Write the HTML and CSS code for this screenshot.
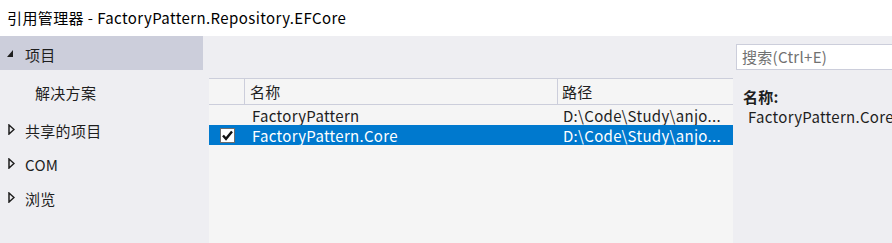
FILE: index.html
```html
<!DOCTYPE html>
<html lang="zh">
<head>
<meta charset="utf-8">
<title>引用管理器</title>
<link rel="stylesheet" href="styles.css">
</head>
<body>
<div class="window">
  <div class="titlebar">引用管理器 - FactoryPattern.Repository.EFCore</div>
  <div class="main">
    <nav class="sidebar">
      <div class="nav-item selected">
        <svg class="arrow" width="6" height="7" viewBox="0 0 6 7"><polygon points="6,0 6,7 0,7" fill="#1e1e1e"/></svg>
        <span>项目</span>
      </div>
      <div class="nav-item child"><span>解决方案</span></div>
      <div class="nav-item">
        <svg class="arrow" width="7" height="11" viewBox="0 0 7 11"><polygon points="1,1 6,5.5 1,10" fill="none" stroke="#1e1e1e" stroke-width="1.5"/></svg>
        <span>共享的项目</span>
      </div>
      <div class="nav-item">
        <svg class="arrow" width="7" height="11" viewBox="0 0 7 11"><polygon points="1,1 6,5.5 1,10" fill="none" stroke="#1e1e1e" stroke-width="1.5"/></svg>
        <span>COM</span>
      </div>
      <div class="nav-item">
        <svg class="arrow" width="7" height="11" viewBox="0 0 7 11"><polygon points="1,1 6,5.5 1,10" fill="none" stroke="#1e1e1e" stroke-width="1.5"/></svg>
        <span>浏览</span>
      </div>
    </nav>
    <section class="center">
      <div class="toolbar"></div>
      <div class="list">
        <div class="row header">
          <div class="cell c-check"></div>
          <div class="cell c-name">名称</div>
          <div class="cell c-path">路径</div>
        </div>
        <div class="row">
          <div class="cell c-check"></div>
          <div class="cell c-name">FactoryPattern</div>
          <div class="cell c-path">D:\Code\Study\anjo...</div>
        </div>
        <div class="row selected">
          <div class="cell c-check">
            <span class="checkbox"><svg width="13" height="13" viewBox="0 0 13 13"><path d="M2 6.5 L5 9.8 L11 2.5" fill="none" stroke="#111" stroke-width="2.4"/></svg></span>
          </div>
          <div class="cell c-name">FactoryPattern.Core</div>
          <div class="cell c-path">D:\Code\Study\anjo...</div>
        </div>
      </div>
    </section>
    <aside class="details">
      <div class="search">搜索(Ctrl+E)</div>
      <div class="label">名称:</div>
      <div class="value">FactoryPattern.Core</div>
    </aside>
  </div>
</div>
</body>
</html>
```

FILE: styles.css
```css
html, body {
  margin: 0;
  padding: 0;
}
body {
  background: #eeeef2;
  color: #1e1e1e;
  font-family: "Noto Sans CJK SC", "Noto Sans", sans-serif;
  font-size: 15px;
  letter-spacing: 0.3px;
  width: 892px;
  height: 243px;
  overflow: hidden;
}
.titlebar {
  height: 36px;
  line-height: 36px;
  background: #ffffff;
  padding-left: 7px;
  color: #000;
  white-space: nowrap;
  letter-spacing: 0.4px;
}
.main {
  display: flex;
  height: 207px;
}
.sidebar {
  width: 203px;
  flex: none;
  display: flex;
  flex-direction: column;
}
.nav-item {
  height: 34px;
  display: flex;
  align-items: center;
  padding-left: 8px;
  gap: 10px;
}
.nav-item span {
  position: relative;
  top: 1px;
}
.nav-item.selected {
  background: #cccedb;
  gap: 12px;
  padding-left: 7px;
}
.nav-item.child {
  height: 42px;
  padding-left: 35px;
}
.center {
  width: 524px;
  margin-left: 6px;
  flex: none;
  display: flex;
  flex-direction: column;
}
.toolbar {
  height: 42px;
  flex: none;
}
.list {
  flex: 1;
  background: #f5f5f5;
}
.row {
  display: flex;
  height: 20px;
  align-items: center;
  white-space: nowrap;
}
.row.header {
  height: 25px;
  border-top: 1px solid #cccedb;
  border-bottom: 1px solid #cccedb;
}
.cell {
  overflow: hidden;
  height: 100%;
  display: flex;
  align-items: center;
}
.c-check {
  width: 35px;
  justify-content: center;
}
.c-name {
  width: 313px;
  padding-left: 8px;
  box-sizing: border-box;
}
.c-path {
  width: 176px;
  padding-left: 6px;
  box-sizing: border-box;
}
.header .c-name {
  border-left: 1px solid #cccedb;
  padding-left: 5px;
}
.header .c-path {
  border-left: 1px solid #cccedb;
  padding-left: 4px;
}
.row.selected {
  background: #0079ce;
  color: #ffffff;
}
.checkbox {
  width: 13px;
  height: 13px;
  background: #ffffff;
  border: 1px solid #6d6d6d;
  display: flex;
  align-items: center;
  justify-content: center;
  margin-left: 1px;
}
.details {
  flex: 1;
  margin-left: 3px;
  padding-top: 8px;
  white-space: nowrap;
}
.search {
  height: 24px;
  line-height: 24px;
  background: #ffffff;
  border: 1px solid #cccedb;
  border-right: none;
  padding-left: 5px;
  color: #717171;
}
.label {
  font-weight: bold;
  margin-top: 17px;
  padding-left: 7px;
  line-height: 20px;
}
.value {
  padding-left: 12px;
  line-height: 20px;
}
```
